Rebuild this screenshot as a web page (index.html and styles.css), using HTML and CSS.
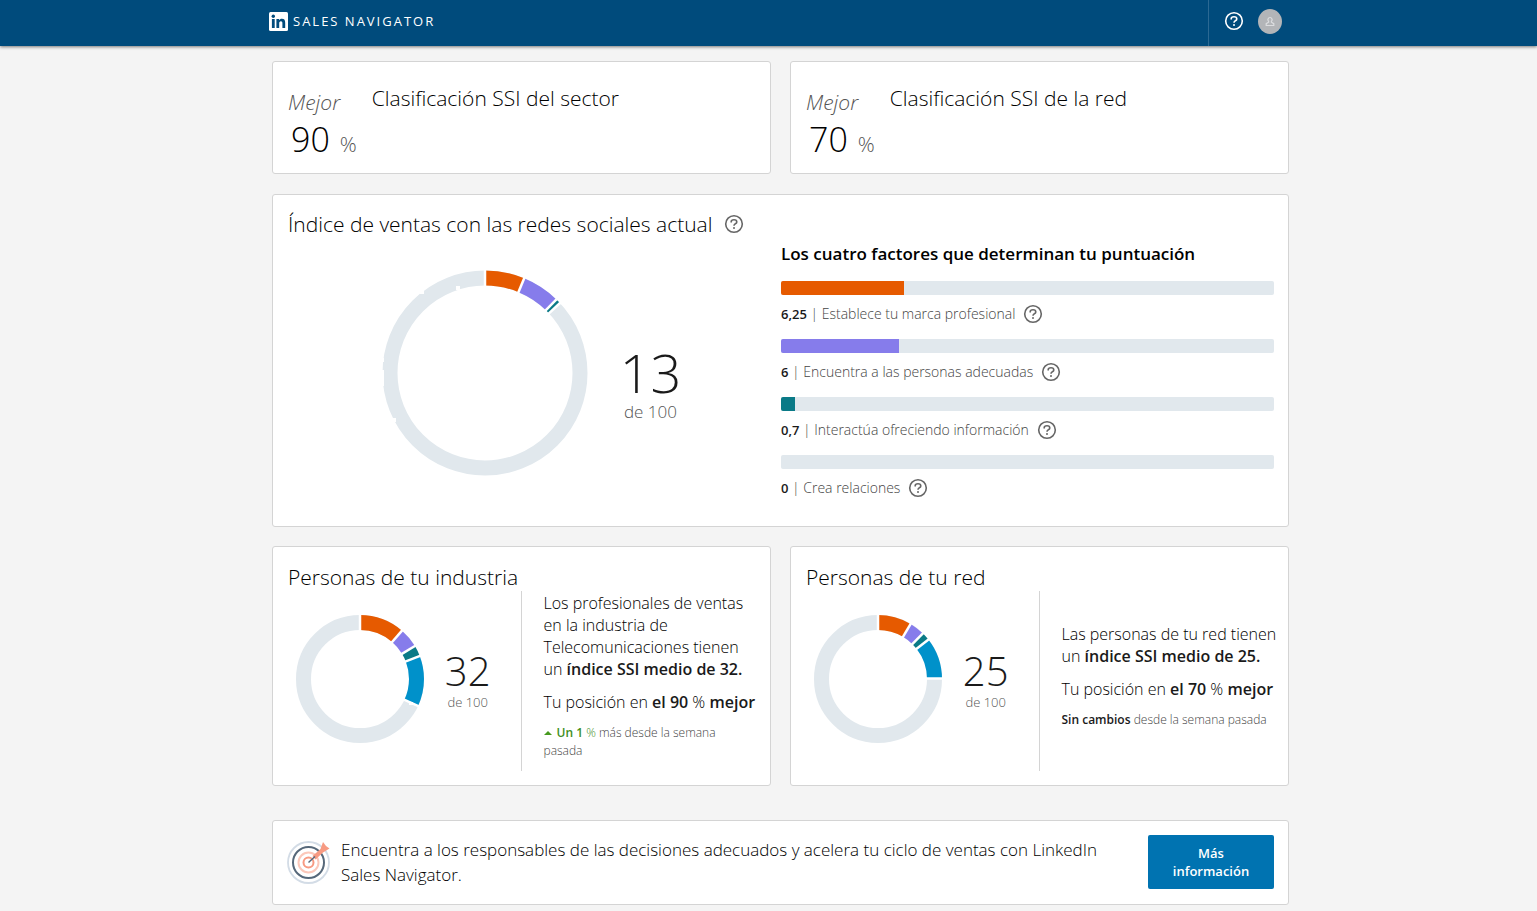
FILE: index.html
```html
<!DOCTYPE html>
<html lang="es">
<head>
<meta charset="utf-8">
<title>Sales Navigator</title>
<link rel="stylesheet" href="styles.css">
</head>
<body>
<svg class="sprite" aria-hidden="true">
  <symbol id="help" viewBox="0 0 20 20">
    <circle cx="10" cy="10" r="8.3" fill="none" stroke="currentColor" stroke-width="1.6"/>
    <path d="M7.2 8.4V7.7Q7.2 5.800 10 5.800T12.800 7.900Q12.800 9 11.400 9.700T10 11.800" fill="none" stroke="currentColor" stroke-width="1.600"/>
    <circle cx="10" cy="14" r="1" fill="currentColor"/>
  </symbol>
</svg>
<header class="topbar">
  <div class="topbar-inner">
    <a class="brand" href="#">
      <svg class="brand-logo" viewBox="0 0 19 19" aria-hidden="true">
        <rect width="19" height="19" rx="1.5" fill="#fff"/>
        <g fill="#004b7c"><circle cx="4.3" cy="4.2" r="1.7"/><rect x="2.9" y="7" width="2.8" height="9"/>
        <path d="M7.4 7h2.7v1.3c.5-.9 1.5-1.5 2.8-1.5 2.6 0 3.3 1.6 3.3 4.1V16h-2.8v-4.6c0-1.2-.2-2.2-1.5-2.2s-1.7 1-1.7 2.2V16H7.4z"/></g>
      </svg>
      <span>SALES NAVIGATOR</span>
    </a>
    <nav class="tools">
      <button class="icon-btn" aria-label="Ayuda"><svg class="help-lg"><use href="#help"/></svg></button>
      <button class="icon-btn" aria-label="Perfil">
        <svg class="avatar" viewBox="0 0 24 24"><ellipse cx="12" cy="12" rx="12" ry="12.5" fill="#b3b5b8"/>
        <path d="M10.600 11.800C9.200 10.600 10 8 12 8s2.800 2.600 1.400 3.800L13.400 12.700 15.800 14.200V16H8.200V14.200L10.600 12.700Z" fill="none" stroke="#dcdddf" stroke-width="1.200"/></svg>
      </button>
    </nav>
  </div>
</header>
<main class="page">
  <div class="pair">
    <section class="card rank">
      <div class="rank-score"><em>Mejor</em><div><strong>90</strong><span>%</span></div></div>
      <h2>Clasificación SSI del sector</h2>
    </section>
    <section class="card rank">
      <div class="rank-score"><em>Mejor</em><div><strong>70</strong><span>%</span></div></div>
      <h2>Clasificación SSI de la red</h2>
    </section>
  </div>

  <section class="card current">
    <div class="overview">
      <div class="title-row"><h2>Índice de ventas con las redes sociales actual</h2>
        <button class="icon-btn" aria-label="Ayuda"><svg class="help"><use href="#help"/></svg></button></div>
      <div class="chart-row">
        <svg class="donut-lg" viewBox="0 0 206 206" role="img" aria-label="13 de 100">
          <g transform="rotate(-90 103 103)" fill="none" stroke-width="15">
            <circle cx="103" cy="103" r="95" stroke="#e1e8ed"/>
            <circle cx="103" cy="103" r="95" stroke="#e65a00" pathLength="100" stroke-dasharray="6.25 100"/>
            <circle cx="103" cy="103" r="95" stroke="#867ceb" pathLength="100" stroke-dasharray="6 100" stroke-dashoffset="-6.25"/>
            <circle cx="103" cy="103" r="95" stroke="#0a7a87" pathLength="100" stroke-dasharray=".7 100" stroke-dashoffset="-12.25"/>
          </g>
          <g stroke="#fff" stroke-width="2.5">
            <path d="M103 20V0"/><path d="M103 20V0" transform="rotate(22.5 103 103)"/><path d="M103 20V0" transform="rotate(44.1 103 103)"/><path d="M103 20V0" transform="rotate(47 103 103)"/>
          </g>
          <path d="M38 20h4v4h-4zM74 16h4v4h-4zM0 88h2v4H0zM0 100h2v16H0zM10 148h4v4h-4z" fill="#fff"/>
        </svg>
        <div class="score score-lg"><strong>13</strong><span>de 100</span></div>
      </div>
    </div>
    <div class="factors">
      <h3>Los cuatro factores que determinan tu puntuación</h3>
      <div class="factor">
        <div class="bar"><div class="fill brand-fill" style="width:25%"></div></div>
        <div class="factor-label"><p><b>6,25</b> | Establece tu marca profesional</p><button class="icon-btn" aria-label="Ayuda"><svg class="help"><use href="#help"/></svg></button></div>
      </div>
      <div class="factor">
        <div class="bar"><div class="fill people-fill" style="width:24%"></div></div>
        <div class="factor-label"><p><b>6</b> | Encuentra a las personas adecuadas</p><button class="icon-btn" aria-label="Ayuda"><svg class="help"><use href="#help"/></svg></button></div>
      </div>
      <div class="factor">
        <div class="bar"><div class="fill info-fill" style="width:2.8%"></div></div>
        <div class="factor-label"><p><b>0,7</b> | Interactúa ofreciendo información</p><button class="icon-btn" aria-label="Ayuda"><svg class="help"><use href="#help"/></svg></button></div>
      </div>
      <div class="factor">
        <div class="bar"></div>
        <div class="factor-label"><p><b>0</b> | Crea relaciones</p><button class="icon-btn" aria-label="Ayuda"><svg class="help"><use href="#help"/></svg></button></div>
      </div>
    </div>
  </section>

  <div class="pair">
    <section class="card peers">
      <h2>Personas de tu industria</h2>
      <div class="peers-body">
        <div class="peers-chart">
          <svg class="donut-sm" viewBox="0 0 130 130" role="img" aria-label="32 de 100">
            <g transform="rotate(-90 65 65)" fill="none" stroke-width="15">
              <circle cx="65" cy="65" r="56.5" stroke="#e1e8ed"/>
              <circle cx="65" cy="65" r="56.5" stroke="#e65a00" pathLength="100" stroke-dasharray="11.4 100"/>
              <circle cx="65" cy="65" r="56.5" stroke="#867ceb" pathLength="100" stroke-dasharray="5 100" stroke-dashoffset="-11.4"/>
              <circle cx="65" cy="65" r="56.5" stroke="#0a7a87" pathLength="100" stroke-dasharray="2.8 100" stroke-dashoffset="-16.4"/>
              <circle cx="65" cy="65" r="56.5" stroke="#0091ca" pathLength="100" stroke-dasharray="12.8 100" stroke-dashoffset="-19.2"/>
            </g>
            <g stroke="#fff" stroke-width="2.5">
              <path d="M65 20V0"/><path d="M65 20V0" transform="rotate(41 65 65)"/><path d="M65 20V0" transform="rotate(59 65 65)"/><path d="M65 20V0" transform="rotate(69 65 65)"/><path d="M65 20V0" transform="rotate(115 65 65)"/>
            </g>
            <path d="M114 88h4v3h-4z" fill="#fff"/>
          </svg>
          <div class="score"><strong>32</strong><span>de 100</span></div>
        </div>
        <div class="peers-text">
          <p>Los profesionales de ventas en la industria de Telecomunicaciones tienen un <b>índice SSI medio de 32.</b></p>
          <p>Tu posición en <b>el 90</b> % <b>mejor</b></p>
          <p class="change"><svg class="up" viewBox="0 0 8 4" aria-hidden="true"><path d="M0 4L4 0L8 4Z"/></svg><span class="gain"><b>Un 1</b> %</span> más desde la semana pasada</p>
        </div>
      </div>
    </section>
    <section class="card peers">
      <h2>Personas de tu red</h2>
      <div class="peers-body">
        <div class="peers-chart">
          <svg class="donut-sm" viewBox="0 0 130 130" role="img" aria-label="25 de 100">
            <g transform="rotate(-90 65 65)" fill="none" stroke-width="15">
              <circle cx="65" cy="65" r="56.5" stroke="#e1e8ed"/>
              <circle cx="65" cy="65" r="56.5" stroke="#e65a00" pathLength="100" stroke-dasharray="8.5 100"/>
              <circle cx="65" cy="65" r="56.5" stroke="#867ceb" pathLength="100" stroke-dasharray="3.9 100" stroke-dashoffset="-8.5"/>
              <circle cx="65" cy="65" r="56.5" stroke="#0a7a87" pathLength="100" stroke-dasharray="2 100" stroke-dashoffset="-12.4"/>
              <circle cx="65" cy="65" r="56.5" stroke="#0091ca" pathLength="100" stroke-dasharray="10.6 100" stroke-dashoffset="-14.4"/>
            </g>
            <g stroke="#fff" stroke-width="2.5">
              <path d="M65 20V0"/><path d="M65 20V0" transform="rotate(30.6 65 65)"/><path d="M65 20V0" transform="rotate(44.6 65 65)"/><path d="M65 20V0" transform="rotate(51.9 65 65)"/><path d="M65 20V0" transform="rotate(89.5 65 65)"/>
            </g>
          </svg>
          <div class="score"><strong>25</strong><span>de 100</span></div>
        </div>
        <div class="peers-text">
          <p>Las personas de tu red tienen un <b>índice SSI medio de 25.</b></p>
          <p>Tu posición en <b>el 70</b> % <b>mejor</b></p>
          <p class="change"><b>Sin cambios</b> desde la semana pasada</p>
        </div>
      </div>
    </section>
  </div>

  <section class="card promo">
    <svg class="target" viewBox="0 0 44 44" aria-hidden="true">
      <g fill="none">
        <circle cx="21.500" cy="22.500" r="20.500" stroke="#d3dce6" stroke-width="1.800"/>
        <circle cx="21.500" cy="22.500" r="15.500" stroke="#56687a" stroke-width="2"/>
        <circle cx="21.500" cy="22.500" r="10" stroke="#fcc8ba" stroke-width="2"/>
        <circle cx="21.500" cy="22.500" r="5" stroke="#f79a82" stroke-width="2"/>
      </g>
      <path d="M25.500 16L33.500 9L36 2L39 6L42.500 8.500L36 12.500L28.500 19.500Z" fill="#f79a82"/>
      <path d="M21.500 22.500L28 16.500" stroke="#56687a" stroke-width="1.500"/>
    </svg>
    <p>Encuentra a los responsables de las decisiones adecuados y acelera tu ciclo de ventas con LinkedIn Sales Navigator.</p>
    <button class="cta">Más información</button>
  </section>
</main>
</body>
</html>
```
FILE: styles.css
```css
* { box-sizing: border-box; }
body {
  margin: 0;
  background: #f4f4f4;
  color: #000;
  font-family: "Open Sans", "Noto Sans", sans-serif;
  font-weight: 300;
}
h2, h3, p { margin: 0; }
h2 { font-size: 21px; line-height: 28px; font-weight: 300; }
b { font-weight: 600; color: #1a1a1a; }
svg { display: block; }
.sprite { position: absolute; width: 0; height: 0; }
.icon-btn { border: 0; padding: 0; background: none; color: #666; display: block; }
.help { width: 20px; height: 20px; }
.help-lg { width: 20px; height: 20px; color: #fff; }

.topbar { background: #004b7c; box-shadow: 0 1px 3px rgba(0, 0, 0, .5); }
.topbar-inner {
  max-width: 1041px;
  margin: 0 auto;
  padding: 0 7px 0 21px;
  display: flex;
  justify-content: space-between;
}
.brand {
  display: flex;
  align-items: center;
  gap: 5px;
  padding-bottom: 4px;
  color: #fff;
  text-decoration: none;
  font-size: 13px;
  font-weight: 400;
  letter-spacing: 2px;
}
.brand-logo { width: 19px; height: 19px; }
.tools {
  display: flex;
  align-items: center;
  gap: 14px;
  height: 46px;
  padding: 0 0 4px 15px;
  border-left: 1px solid #2b6993;
}
.avatar { width: 24px; height: 25px; }

.page {
  max-width: 1041px;
  margin: 0 auto;
  padding: 15px 0 6px 24px;
}
.card {
  background: #fff;
  border: 1px solid #d4d4d4;
  border-radius: 3px;
}
.pair { display: grid; grid-template-columns: 1fr 1fr; gap: 19px; }

.rank { display: flex; gap: 15px; padding: 22px 15px 11px; }
.rank-score em { display: block; font-size: 21px; line-height: 36px; color: #555; }
.rank-score div { display: flex; align-items: baseline; gap: 10px; padding: 1px 0 0 3px; line-height: 36px; }
.rank-score strong { font-size: 34px; font-weight: 300; }
.rank-score span { font-size: 21px; color: #555; }

.current {
  display: grid;
  grid-template-columns: 1fr 1fr;
  margin: 20px 0 19px;
  padding: 15px 14px 28px 15px;
}
.title-row { display: flex; align-items: center; gap: 12px; }
.chart-row {
  display: flex;
  align-items: center;
  justify-content: center;
  gap: 32px;
  padding: 32px 6px 0 0;
}
.donut-lg { width: 206px; height: 206px; }
.score { display: flex; flex-direction: column; align-items: center; padding-top: 2px; color: #555; font-size: 13px; line-height: 18px; }
.score strong { font-size: 40px; line-height: 44px; font-weight: 300; color: #1a1a1a; }
.score-lg { font-size: 17px; line-height: 24px; padding-top: 22px; }
.score-lg strong { font-size: 54px; line-height: 56px; }
.factors { padding-top: 30px; }
.factors h3 { font-size: 17px; line-height: 28px; font-weight: 600; margin-bottom: 13px; }
.factor { padding-bottom: 15px; }
.factor:last-child { padding-bottom: 0; }
.factor-label { display: flex; align-items: center; gap: 8px; padding-top: 9px; }
.factor p { font-size: 14px; line-height: 20px; color: #444; }
.factor b { font-size: 13px; }
.bar { height: 14px; border-radius: 2px; background: #e1e8ed; }
.fill { height: 14px; border-radius: 2px 0 0 2px; }
.brand-fill { background: #e65a00; }
.people-fill { background: #867ceb; }
.info-fill { background: #0a7a87; }

.peers { padding: 16px 15px 14px; }
.peers-body { display: grid; grid-template-columns: 1fr 1fr; height: 180px; }
.peers-chart { display: flex; align-items: center; justify-content: space-between; padding: 0 30px 4px 7px; border-right: 1px solid #d4d4d4; }
.donut-sm { width: 130px; height: 130px; }
.peers-text { display: flex; flex-direction: column; justify-content: center; gap: 11px; padding: 0 10px 10px 22px; font-size: 16px; line-height: 22px; margin-right: -14px; }
.peers-text .change { font-size: 12px; line-height: 18px; padding-right: 6px; color: #444; }
.change .gain, .change .gain b { color: #3f8f1d; }
.up { display: inline-block; width: 8px; height: 4px; margin: 0 5px 2px 0; fill: #469a1f; }

.promo { display: flex; align-items: center; margin-top: 34px; padding: 14px 14px 15px; }
.target { width: 44px; height: 44px; flex: none; }
.promo p { flex: 1; font-size: 17px; line-height: 25px; padding: 0 20px 0 10px; }
.cta {
  width: 126px;
  padding: 9px 20px;
  border: 0;
  border-radius: 2px;
  background: #0073b1;
  color: #fff;
  font: 600 13px/18px "Open Sans", "Noto Sans", sans-serif;
}
```
